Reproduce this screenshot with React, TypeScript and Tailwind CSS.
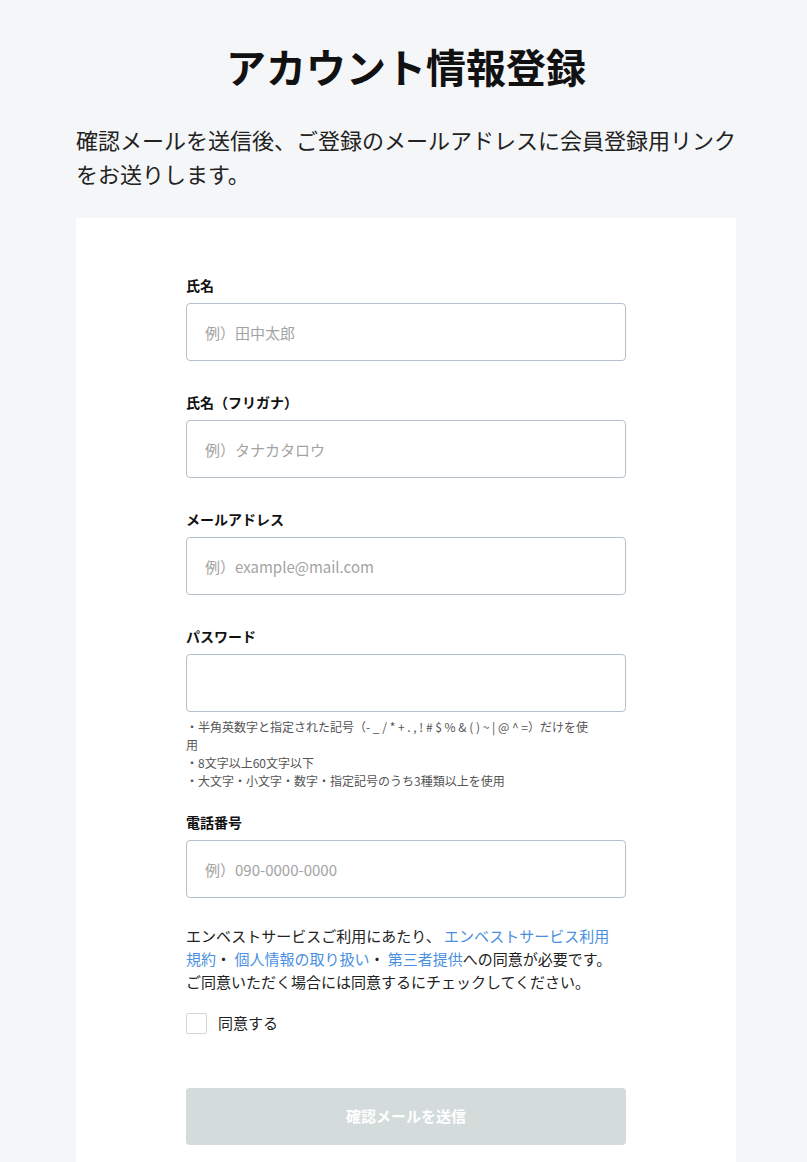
import React from "react";

const font = { fontFamily: '"Noto Sans CJK JP", "Noto Sans", sans-serif' };

function Field({ label, placeholder, type = "text" }: { label: string; placeholder?: string; type?: string }) {
  return (
    <div>
      <label className="mb-[9px] block text-[14px] font-bold leading-[18px] text-[#111]">{label}</label>
      <input
        type={type}
        placeholder={placeholder}
        className="block h-[58px] w-full rounded-[4px] border border-[#b5c0ca] bg-white px-[18px] text-[15px] text-[#222] outline-none placeholder:text-[#a3a3a3]"
      />
    </div>
  );
}

export default function App() {
  return (
    <div className="min-h-screen bg-[#f5f6f8]" style={font}>
      <div className="ml-[76px] w-[660px]">
        <h1 className="pt-[42px] text-center text-[40px] font-bold leading-[48px] text-[#111]">
          アカウント情報登録
        </h1>
        <p className="mt-[32px] text-[22px] leading-[34px] text-[#222]">
          確認メールを送信後、ご登録のメールアドレスに会員登録用リンク
          <br />
          をお送りします。
        </p>
        <div className="mt-[28px] bg-white px-[110px] pb-[60px] pt-[58px]">
          <div className="flex flex-col gap-[32px]">
            <Field label="氏名" placeholder="例）田中太郎" />
            <Field label="氏名（フリガナ）" placeholder="例）タナカタロウ" />
            <Field label="メールアドレス" placeholder="例）example@mail.com" />
            <div>
              <Field label="パスワード" type="password" />
              <p className="mt-[6px] text-[12px] leading-[18px] text-[#555]">
                ・半角英数字と指定された記号（- _ / * + . , ! # $ % &amp; ( ) ~ | @ ^ =）だけを使
                <br />
                用
                <br />
                ・8文字以上60文字以下
                <br />
                ・大文字・小文字・数字・指定記号のうち3種類以上を使用
              </p>
            </div>
          </div>
          <div className="mt-[23px]">
            <Field label="電話番号" placeholder="例）090-0000-0000" />
          </div>
          <p className="mt-[26px] text-[15px] leading-[23px] text-[#222]">
            エンベストサービスご利用にあたり、 <a className="text-[#4a90e2]">エンベストサービス利用</a>
            <br />
            <a className="text-[#4a90e2]">規約</a>・ <a className="text-[#4a90e2]">個人情報の取り扱い</a>・{" "}
            <a className="text-[#4a90e2]">第三者提供</a>への同意が必要です。
            <br />
            ご同意いただく場合には同意するにチェックしてください。
          </p>
          <label className="mt-[19px] flex items-center gap-[11px]">
            <span className="block h-[21px] w-[21px] rounded-[2px] border border-[#d3d7db] bg-white" />
            <span className="text-[15px] leading-[22px] text-[#222]">同意する</span>
          </label>
          <button
            disabled
            className="mt-[54px] block h-[57px] w-full rounded-[4px] bg-[#d3dbdb] text-[15px] font-bold text-white"
          >
            確認メールを送信
          </button>
        </div>
      </div>
    </div>
  );
}
